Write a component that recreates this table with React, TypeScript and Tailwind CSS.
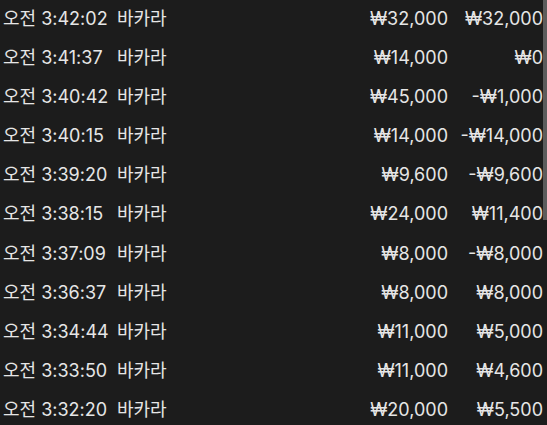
import React from 'react';

type Row = { time: string; game: string; bet: string; result: string };

const ROWS: Row[] = [
  { time: '오전 3:42:02', game: '바카라', bet: '₩32,000', result: '₩32,000' },
  { time: '오전 3:41:37', game: '바카라', bet: '₩14,000', result: '₩0' },
  { time: '오전 3:40:42', game: '바카라', bet: '₩45,000', result: '-₩1,000' },
  { time: '오전 3:40:15', game: '바카라', bet: '₩14,000', result: '-₩14,000' },
  { time: '오전 3:39:20', game: '바카라', bet: '₩9,600', result: '-₩9,600' },
  { time: '오전 3:38:15', game: '바카라', bet: '₩24,000', result: '₩11,400' },
  { time: '오전 3:37:09', game: '바카라', bet: '₩8,000', result: '-₩8,000' },
  { time: '오전 3:36:37', game: '바카라', bet: '₩8,000', result: '₩8,000' },
  { time: '오전 3:34:44', game: '바카라', bet: '₩11,000', result: '₩5,000' },
  { time: '오전 3:33:50', game: '바카라', bet: '₩11,000', result: '₩4,600' },
  { time: '오전 3:32:20', game: '바카라', bet: '₩20,000', result: '₩5,500' },
];

export default function App() {
  return (
    <div
      className="relative w-[547px] h-[425px] overflow-hidden bg-[#1c1c1c] text-[#e6e6e6] text-[18px]"
      style={{ fontFamily: 'Inter, "Noto Sans CJK KR", sans-serif' }}
    >
      <div className="-mt-[1.6px]">
        {ROWS.map((r) => (
          <div key={r.time} className="flex items-center h-[39.2px] pl-[3px] pr-[4px]">
            <span className="w-[114px] whitespace-nowrap">{r.time}</span>
            <span>{r.game}</span>
            <span className="ml-auto text-right">{r.bet}</span>
            <span className="w-[95px] text-right">{r.result}</span>
          </div>
        ))}
      </div>

      {/* 스크롤바 */}
      <div className="absolute right-0 top-0 w-[4px] h-[220px] bg-[#5c5c5c]" />
    </div>
  );
}
